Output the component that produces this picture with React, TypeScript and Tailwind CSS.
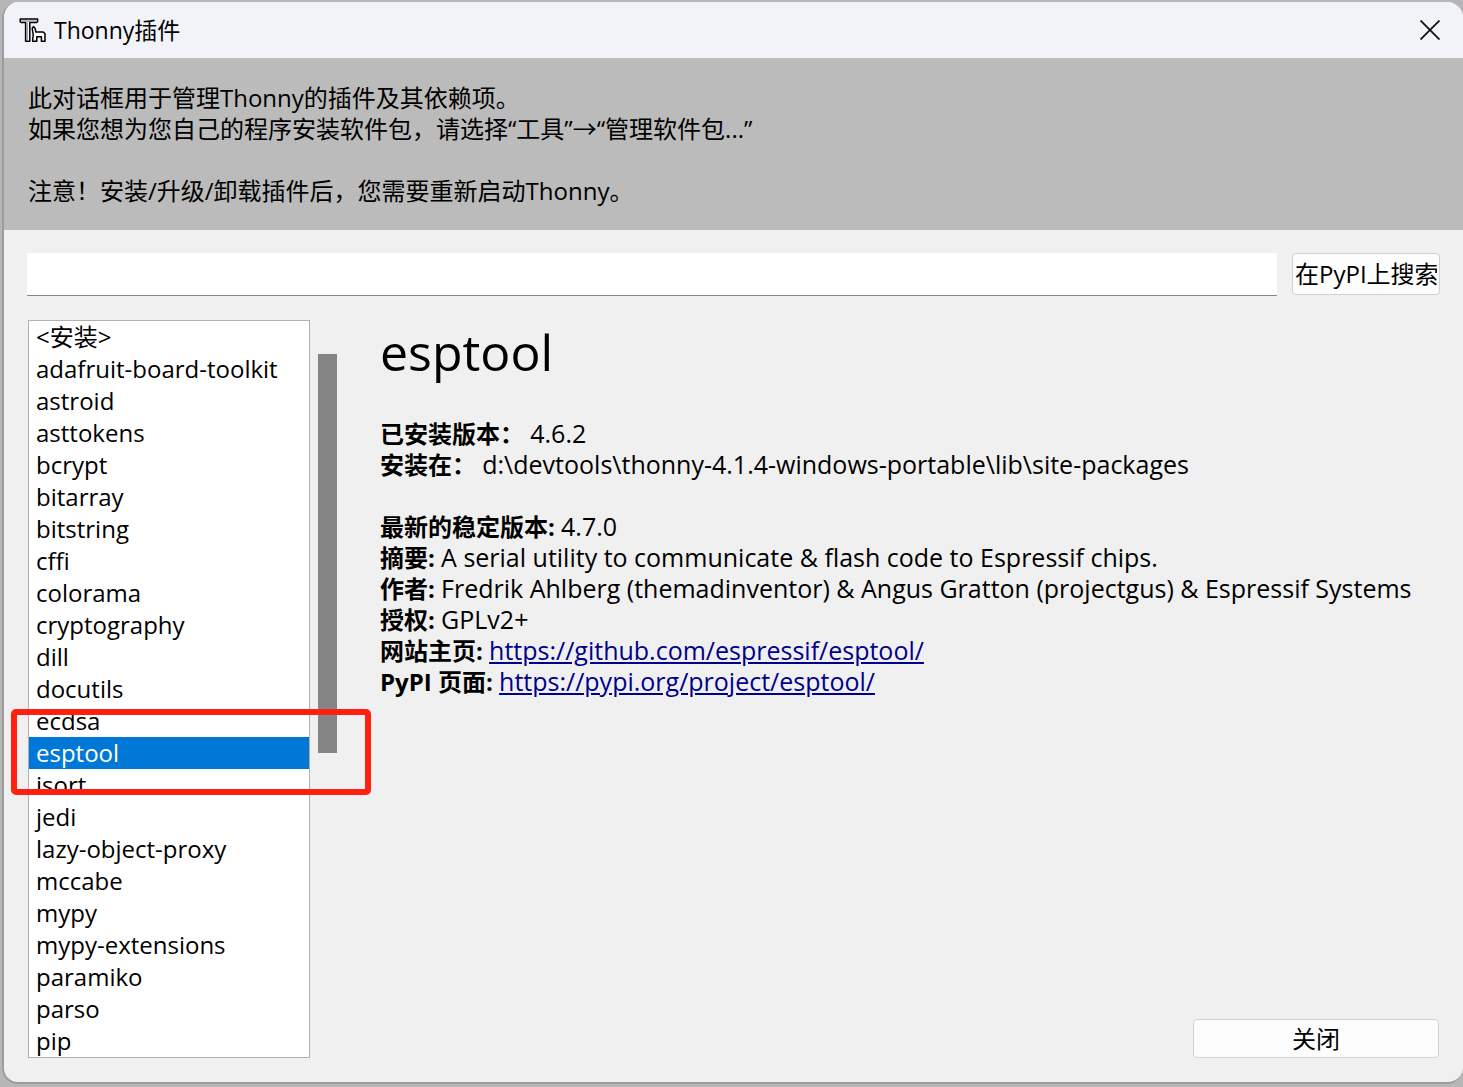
import { useState } from 'react';
import type { ReactNode } from 'react';

const PACKAGES = [
  '<安装>',
  'adafruit-board-toolkit',
  'astroid',
  'asttokens',
  'bcrypt',
  'bitarray',
  'bitstring',
  'cffi',
  'colorama',
  'cryptography',
  'dill',
  'docutils',
  'ecdsa',
  'esptool',
  'isort',
  'jedi',
  'lazy-object-proxy',
  'mccabe',
  'mypy',
  'mypy-extensions',
  'paramiko',
  'parso',
  'pip',
];

function ThonnyLogo() {
  return (
    <svg width="27" height="27" viewBox="0 0 27 27" fill="#fff" stroke="#000" strokeWidth="1.5" strokeLinejoin="round" aria-hidden="true">
      <path d="M1.2 2h17.4v2.6l-1 .9h-6.8v18.8H6.6V5.5H2.2l-1-.9z" />
      <path d="M2.5 4h15M8.2 5.5v18" fill="none" stroke="#777" strokeWidth="1" />
      <path d="M13.2 11.5l1.2-1.9 1.8 1.9.6 3.5h7.4l1.8 1.8v7.5h-3.6v-4.6h-4.6v4.6h-4.2l.6-6.6z" />
    </svg>
  );
}

function CloseIcon() {
  return (
    <svg width="20" height="20" viewBox="0 0 20 20" fill="none" stroke="#111" strokeWidth="1.8" aria-hidden="true">
      <path d="M0.5 0.5l19 19M19.5 0.5l-19 19" />
    </svg>
  );
}

function Field({ label, children }: { label: string; children: ReactNode }) {
  return (
    <p>
      <strong className="font-bold">{label}</strong> <span className="text-[25px]">{children}</span>
    </p>
  );
}

function PackageList({ selected, onSelect }: { selected: string; onSelect: (name: string) => void }) {
  return (
    <div className="relative flex gap-2">
      <ul className="w-[282px] border border-[#b0b0b0] bg-white">
        {PACKAGES.map((name) => (
          <li key={name}>
            <button
              type="button"
              onClick={() => onSelect(name)}
              className={
                name === selected
                  ? 'block h-8 w-full bg-[#0078d7] px-[7px] text-left leading-8 whitespace-nowrap text-white'
                  : 'block h-8 w-full px-[7px] text-left leading-8 whitespace-nowrap'
              }
            >
              {name}
            </button>
          </li>
        ))}
      </ul>
      <div className="mt-[34px] h-[399px] w-[19px] bg-[#858585]" />
      <div className="pointer-events-none absolute top-[389px] -left-[17px] h-[86px] w-[360px] rounded-[5px] border-6 border-[#ff2010]" />
    </div>
  );
}

function PackageDetail() {
  return (
    <section className="min-w-0 flex-1 leading-[31px]">
      <h1 className="text-[50px] leading-[64px]">esptool</h1>
      <div className="mt-[34px]">
        <Field label="已安装版本：">4.6.2</Field>
        <Field label="安装在：">d:\devtools\thonny-4.1.4-windows-portable\lib\site-packages</Field>
      </div>
      <div className="mt-[31px]">
        <Field label="最新的稳定版本:">4.7.0</Field>
        <Field label="摘要:">A serial utility to communicate &amp; flash code to Espressif chips.</Field>
        <Field label="作者:">
          Fredrik Ahlberg (themadinventor) &amp; Angus Gratton (projectgus) &amp; Espressif Systems
        </Field>
        <Field label="授权:">GPLv2+</Field>
        <Field label="网站主页:">
          <a href="https://github.com/espressif/esptool/" className="text-[#00008b] underline">
            https://github.com/espressif/esptool/
          </a>
        </Field>
        <Field label="PyPI 页面:">
          <a href="https://pypi.org/project/esptool/" className="text-[#00008b] underline">
            https://pypi.org/project/esptool/
          </a>
        </Field>
      </div>
    </section>
  );
}

export default function App() {
  const [selected, setSelected] = useState('esptool');
  const [query, setQuery] = useState('');

  return (
    <div className="flex min-h-screen flex-col bg-[#b6b6b6] pt-[2px] pb-1 pl-[2px] font-['Open_Sans','Noto_Sans_CJK_SC',sans-serif] text-[24px] text-black">
      <div className="flex flex-1 flex-col overflow-hidden rounded-[16px] border-b-2 border-l-2 border-[#9d9d9d] bg-[#f0f0f0]">
        <header className="flex h-14 items-center gap-2 bg-[#f2f2f9] pr-[23px] pl-[15px]">
          <ThonnyLogo />
          <span className="flex-1 text-[23px]">Thonny插件</span>
          <button type="button" aria-label="关闭窗口">
            <CloseIcon />
          </button>
        </header>

        <div className="bg-[#bbbbbb] px-6 py-6 leading-[31px]">
          <p>此对话框用于管理Thonny的插件及其依赖项。</p>
          <p>如果您想为您自己的程序安装软件包，请选择“工具”→“管理软件包...”</p>
          <p className="mt-[31px]">注意！安装/升级/卸载插件后，您需要重新启动Thonny。</p>
        </div>

        <main className="flex flex-1 flex-col px-6 pt-[23px] pb-6">
          <form className="-mx-px flex gap-[15px]" onSubmit={(e) => e.preventDefault()}>
            <input
              type="text"
              aria-label="在PyPI上搜索"
              value={query}
              onChange={(e) => setQuery(e.target.value)}
              className="h-[43px] min-w-0 flex-1 border-b border-[#868686] bg-white px-2 outline-none"
            />
            <button
              type="submit"
              className="h-[42px] w-[148px] rounded-[4px] border border-[#d0d0d0] bg-[#fdfdfd] px-[2px] text-left whitespace-nowrap"
            >
              <span className="block overflow-hidden">在PyPI上搜索</span>
            </button>
          </form>

          <div className="mt-6 flex flex-1 gap-[43px]">
            <PackageList selected={selected} onSelect={setSelected} />
            <div className="flex min-w-0 flex-1 flex-col justify-between">
              <PackageDetail />
              <button
                type="button"
                className="h-[39px] w-[246px] self-end rounded-[4px] border border-[#d0d0d0] bg-[#fdfdfd]"
              >
                关闭
              </button>
            </div>
          </div>
        </main>
      </div>
    </div>
  );
}
